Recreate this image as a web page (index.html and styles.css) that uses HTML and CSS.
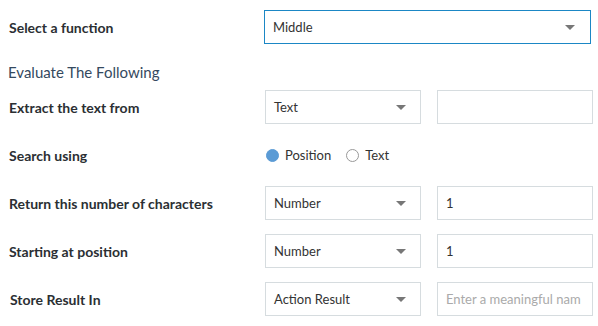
FILE: index.html
```html
<!DOCTYPE html>
<html lang="en">
<head>
    <meta charset="UTF-8">
    <title>Function Settings</title>
    <link rel="stylesheet" href="styles.css">
</head>
<body>
    <div class="form">
        <div class="row row-top">
            <div class="label">Select a function</div>
            <div class="select select-main">
                <span>Middle</span>
                <span class="arrow"></span>
            </div>
        </div>

        <div class="heading">Evaluate The Following</div>

        <div class="row">
            <div class="label">Extract the text from</div>
            <div class="fields">
                <div class="select"><span>Text</span><span class="arrow"></span></div>
                <div class="input"></div>
            </div>
        </div>

        <div class="row">
            <div class="label">Search using</div>
            <div class="radios">
                <label class="radio"><span class="dot checked"></span>Position</label>
                <label class="radio"><span class="dot"></span>Text</label>
            </div>
        </div>

        <div class="row">
            <div class="label">Return this number of characters</div>
            <div class="fields">
                <div class="select"><span>Number</span><span class="arrow"></span></div>
                <div class="input">1</div>
            </div>
        </div>

        <div class="row">
            <div class="label">Starting at position</div>
            <div class="fields">
                <div class="select"><span>Number</span><span class="arrow"></span></div>
                <div class="input">1</div>
            </div>
        </div>

        <div class="row">
            <div class="label label-last">Store Result In</div>
            <div class="fields">
                <div class="select"><span>Action Result</span><span class="arrow"></span></div>
                <div class="input placeholder">Enter a meaningful nam</div>
            </div>
        </div>
    </div>
</body>
</html>
```

FILE: styles.css
```css
* {
    margin: 0;
    padding: 0;
    box-sizing: border-box;
}

body {
    background: #fff;
    font-family: Lato, "Open Sans", sans-serif;
    color: #333;
    font-size: 13px;
}

.form {
    padding: 10px 0 0 9px;
    width: 598px;
}

.row {
    display: grid;
    grid-template-columns: 256px 328px;
    align-items: center;
    height: 34px;
    margin-bottom: 14px;
}

.row-top {
    grid-template-columns: 255px 327px;
    margin-bottom: 0;
}

.label {
    font-weight: bold;
    font-size: 14px;
    color: #2b2f33;
}

.label-last {
    padding-left: 1px;
}

.heading {
    font-size: 15px;
    color: #34495e;
    line-height: 20px;
    margin: 18px 0 8px -1px;
}

.fields {
    display: flex;
    gap: 16px;
}

.select,
.input {
    height: 34px;
    border: 1px solid #d6dcdf;
    display: flex;
    align-items: center;
    padding: 0 8px;
    width: 156px;
    color: #333;
}

.select {
    justify-content: space-between;
    padding-right: 14px;
}

.select-main {
    width: 327px;
    border-color: #1b87c5;
    padding-right: 15px;
}

.arrow {
    width: 0;
    height: 0;
    border-left: 5px solid transparent;
    border-right: 5px solid transparent;
    border-top: 5px solid #777;
}

.placeholder {
    color: #aaa;
    white-space: nowrap;
    overflow: hidden;
}

.radios {
    display: flex;
    gap: 15px;
    padding-left: 1px;
}

.radio {
    display: flex;
    align-items: center;
    gap: 6px;
    font-size: 13px;
}

.dot {
    width: 13px;
    height: 13px;
    border-radius: 50%;
    border: 1px solid #999;
}

.dot.checked {
    background: #5b9bd5;
    border-color: #5b9bd5;
}
```
